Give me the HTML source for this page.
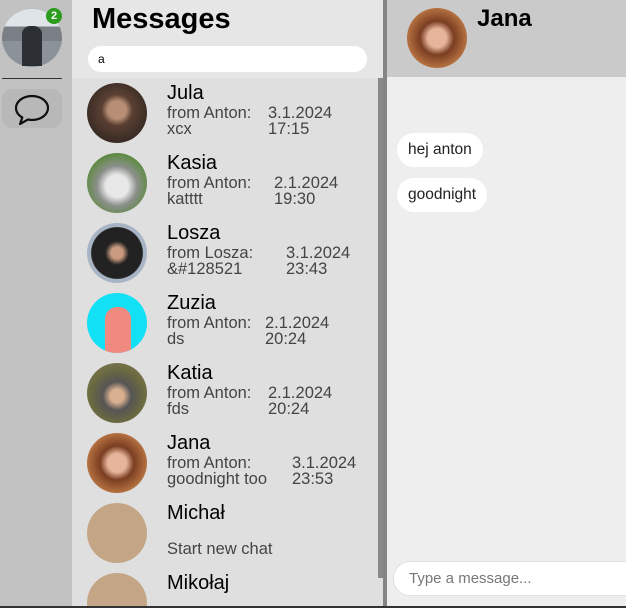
<!DOCTYPE html>
<html style="overflow:hidden;width:626px;height:608px"><head><meta charset="utf-8"><style>
*{margin:0;padding:0;box-sizing:border-box}
body{width:626px;height:608px;overflow:hidden;font-family:"Liberation Sans",Roboto,sans-serif;background:#eee;position:relative}
.abs{position:absolute}
.side{left:0;top:0;width:72px;height:608px;background:#c2c2c2}
.list{left:72px;top:0;width:311px;height:608px;background:#dfdfdf;overflow:hidden}
.lh{left:72px;top:0;width:311px;height:78px;background:#e6e6e6}
.div{left:383px;top:0;width:4px;height:608px;background:#858585}
.sb{left:378px;top:78px;width:5px;height:500px;background:#8a8a8a}
.chat{left:387px;top:0;width:239px;height:608px;background:#eeeeee}
.ch{left:387px;top:0;width:239px;height:77px;background:#cacaca}
.av{position:absolute;width:60px;height:60px;border-radius:50%}
.nm{position:absolute;left:95px;font-size:20px;color:#000}
.sub{position:absolute;left:95px;font-size:16.5px;color:#444;line-height:16px}
.dt{position:absolute;font-size:16.5px;color:#444;line-height:16px}
.list .av{left:15px}
.bub{position:absolute;left:397px;background:#fff;border-radius:17px;font-size:15.5px;color:#222;padding:0 11px;height:34px;line-height:34px}
</style></head><body>
<div class="abs side"></div>
<div class="abs chat"></div>
<div class="abs ch"></div>

<div class="abs list">
<div class="av" style="top:83px;background:radial-gradient(circle at 50% 45%,#b88f74 0 20%,#5a3f32 35%,#3a2c25 70%)"></div>
<div class="nm" style="top:82px">Jula</div>
<div class="sub" style="top:105px">from Anton:<br>xcx</div>
<div class="dt" style="left:196px;top:105px">3.1.2024<br>17:15</div>

<div class="av" style="top:153px;background:radial-gradient(circle at 50% 55%,#e8e8e8 0 25%,#8a8f8a 45%,#5a8a3a 75%)"></div>
<div class="nm" style="top:152px">Kasia</div>
<div class="sub" style="top:175px">from Anton:<br>katttt</div>
<div class="dt" style="left:202px;top:175px">2.1.2024<br>19:30</div>

<div class="av" style="top:223px;background:radial-gradient(circle at 50% 50%,#c99a80 0 14%,#222 28% 60%,#a8b4c4 62%)"></div>
<div class="nm" style="top:222px">Losza</div>
<div class="sub" style="top:245px">from Losza:<br>&amp;#128521</div>
<div class="dt" style="left:214px;top:245px">3.1.2024<br>23:43</div>

<div class="av" style="top:293px;background:#12e0f5;overflow:hidden"><div style="position:absolute;left:18px;top:14px;width:26px;height:50px;background:#f08a80;border-radius:12px 12px 0 0"></div></div>
<div class="nm" style="top:292px">Zuzia</div>
<div class="sub" style="top:315px">from Anton:<br>ds</div>
<div class="dt" style="left:193px;top:315px">2.1.2024<br>20:24</div>

<div class="av" style="top:363px;background:radial-gradient(circle at 50% 55%,#d9b090 0 15%,#555 32%,#6b6a40 60%,#8a8060)"></div>
<div class="nm" style="top:362px">Katia</div>
<div class="sub" style="top:385px">from Anton:<br>fds</div>
<div class="dt" style="left:196px;top:385px">2.1.2024<br>20:24</div>

<div class="av" style="top:433px;background:radial-gradient(circle at 50% 50%,#e6b49a 0 22%,#7a3e22 40%,#b47040 70%)"></div>
<div class="nm" style="top:432px">Jana</div>
<div class="sub" style="top:455px">from Anton:<br>goodnight too</div>
<div class="dt" style="left:220px;top:455px">3.1.2024<br>23:53</div>

<div class="av" style="top:503px;background:#c4a686"></div>
<div class="nm" style="top:502px">Michał</div>
<div class="sub" style="top:541px">Start new chat</div>
<div class="av" style="top:573px;background:#c4a686"></div>
<div class="nm" style="top:572px">Mikołaj</div>
</div>
<div class="abs lh"></div>
<div class="abs div"></div>
<div class="abs sb"></div>
<div class="abs" style="left:0;top:606px;width:626px;height:2px;background:#333"></div>

<div class="av" style="left:2px;top:9px;width:60px;height:58px;background:linear-gradient(#dfe4e8 0 30%,#7a7f86 30% 55%,#8b9299 55%)"></div>
<div class="abs" style="left:22px;top:26px;width:20px;height:40px;background:#2c2f33;border-radius:8px 8px 0 0"></div>
<div class="abs" style="left:46px;top:8px;width:16px;height:16px;border-radius:50%;background:#2a9d1d;color:#fff;font-size:11px;text-align:center;line-height:16px;font-weight:bold">2</div>
<div class="abs" style="left:2px;top:78px;width:60px;height:1px;background:#333"></div>
<div class="abs" style="left:2px;top:89px;width:60px;height:39px;border-radius:10px;background:#b8b8b8"></div>
<svg class="abs" style="left:13px;top:92px" width="38" height="36" viewBox="0 0 38 36"><path d="M19 4C10 4 3 9.5 3 16c0 4 2.5 7.3 6.3 9.5L7 32l8-4.5c1.3.3 2.6.5 4 .5 9 0 16-5.5 16-12S28 4 19 4z" fill="none" stroke="#111" stroke-width="2.2" stroke-linejoin="round"/></svg>

<div class="abs" style="left:92px;top:3px;font-size:29px;font-weight:bold;color:#000">Messages</div>
<div class="abs" style="left:88px;top:46px;width:279px;height:26px;border-radius:13px;background:#fff;font-size:12px;padding-left:10px;line-height:26px">a</div>

<div class="av" style="left:407px;top:8px;background:radial-gradient(circle at 50% 50%,#e6b49a 0 22%,#7a3e22 40%,#b47040 70%)"></div>
<div class="abs" style="left:477px;top:5px;font-size:24px;font-weight:bold">Jana</div>
<div class="bub" style="top:133px">hej anton</div>
<div class="bub" style="top:178px">goodnight</div>
<div class="abs" style="left:393px;top:561px;width:250px;height:35px;border-radius:17px;background:#fff;border:1px solid #e0e0e0;font-size:15px;color:#777;line-height:33px;padding-left:15px">Type a message...</div>
</body></html>
